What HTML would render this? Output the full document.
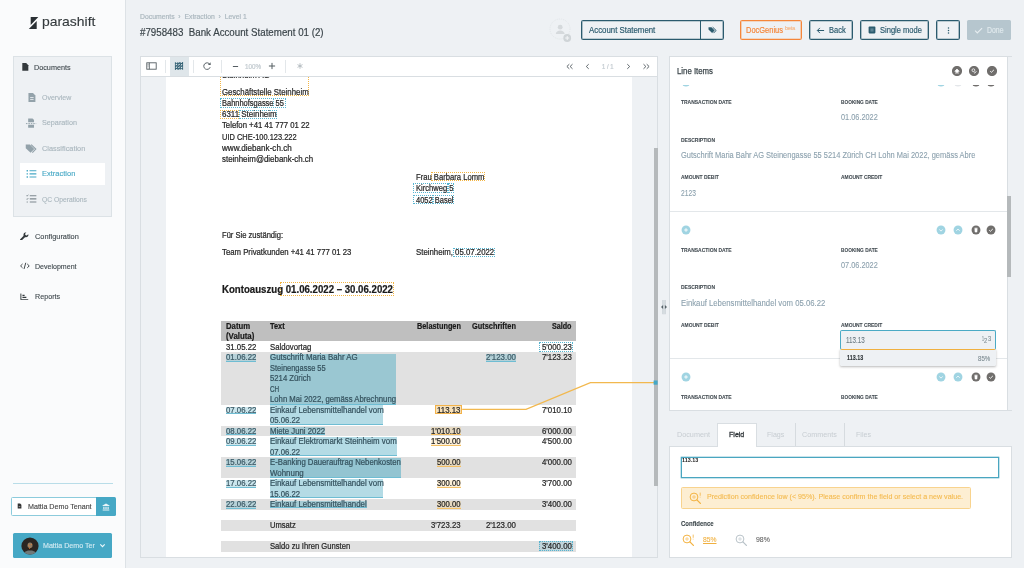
<!DOCTYPE html>
<html><head><meta charset="utf-8"><title>Parashift</title>
<style>
html,body{margin:0;padding:0;}
body{width:1024px;height:568px;overflow:hidden;position:relative;background:#eef1f4;opacity:0.999;will-change:transform;font-family:"Liberation Sans",sans-serif;}
body>div,body>span,body>svg{position:absolute;box-sizing:border-box;}
body>span{white-space:pre;transform-origin:0 50%;}

</style></head><body>
<div style="left:0.00px;top:0.00px;width:125.50px;height:568.00px;background:#fafbfc;border-right:1px solid #dde2e6;"></div>
<svg style="left:28.00px;top:16.00px;" width="12" height="14" viewBox="0 0 12 14"><path d="M2.7 1H10.3L2.7 8.9zM8.7 5V12.9H0.8z" fill="#2a3034"/></svg>
<span style="left:42.00px;top:13.84px;font-size:13.6px;line-height:16.32px;color:#33393c;transform:scaleX(1.0242);-webkit-text-stroke:0.12px;">parashift</span>
<div style="left:13.00px;top:55.50px;width:99.30px;height:161.50px;background:#eef1f4;border:1px solid #dce2e6;"></div>
<div style="left:20.00px;top:163.30px;width:85.40px;height:21.40px;background:#ffffff;"></div>
<span style="left:34.40px;top:62.78px;font-size:7.7px;line-height:9.24px;color:#3f484d;transform:scaleX(0.9411);-webkit-text-stroke:0.12px;">Documents</span>
<span style="left:42.00px;top:92.58px;font-size:7.7px;line-height:9.24px;color:#a9b6bd;transform:scaleX(0.9112);-webkit-text-stroke:0.12px;">Overview</span>
<span style="left:42.00px;top:118.28px;font-size:7.7px;line-height:9.24px;color:#a9b6bd;transform:scaleX(0.9412);-webkit-text-stroke:0.12px;">Separation</span>
<span style="left:42.00px;top:143.78px;font-size:7.7px;line-height:9.24px;color:#a9b6bd;transform:scaleX(0.9559);-webkit-text-stroke:0.12px;">Classification</span>
<span style="left:42.00px;top:169.28px;font-size:7.7px;line-height:9.24px;color:#46a8c5;transform:scaleX(0.9740);-webkit-text-stroke:0.12px;">Extraction</span>
<span style="left:42.00px;top:194.68px;font-size:7.7px;line-height:9.24px;color:#a9b6bd;transform:scaleX(0.8775);-webkit-text-stroke:0.12px;">QC Operations</span>
<span style="left:34.50px;top:231.58px;font-size:7.7px;line-height:9.24px;color:#3f484d;transform:scaleX(0.9577);-webkit-text-stroke:0.12px;">Configuration</span>
<span style="left:34.50px;top:261.78px;font-size:7.7px;line-height:9.24px;color:#3f484d;transform:scaleX(0.9162);-webkit-text-stroke:0.12px;">Development</span>
<span style="left:34.50px;top:292.18px;font-size:7.7px;line-height:9.24px;color:#3f484d;transform:scaleX(0.9323);-webkit-text-stroke:0.12px;">Reports</span>
<div style="left:13.00px;top:483.00px;width:99.50px;height:1.00px;background:#b9dde8;"></div>
<div style="left:11.00px;top:497.30px;width:85.50px;height:18.70px;background:#fff;border:1px solid #8ccbdc;border-radius:1.5px 0 0 1.5px;"></div>
<div style="left:96.00px;top:497.30px;width:19.50px;height:18.70px;background:#46a8c5;border-radius:0 1.5px 1.5px 0;"></div>
<span style="left:27.60px;top:502.56px;font-size:7.4px;line-height:8.88px;color:#444;transform:scaleX(0.9634);-webkit-text-stroke:0.12px;">Mattia Demo Tenant</span>
<div style="left:13.00px;top:533.20px;width:99.30px;height:24.50px;background:#46a8c5;border-radius:1.5px;"></div>
<span style="left:42.80px;top:540.92px;font-size:7.8px;line-height:9.36px;color:#d2eaf2;transform:scaleX(0.9078);-webkit-text-stroke:0.12px;">Mattia Demo Ter</span>
<span style="left:139.80px;top:12.58px;font-size:7.2px;line-height:8.64px;color:#a9b6bd;transform:scaleX(0.9506);-webkit-text-stroke:0.18px;">Documents  ›  Extraction  ›  Level 1</span>
<span style="left:139.80px;top:26.72px;font-size:10.3px;line-height:12.36px;color:#3a4449;transform:scaleX(0.9461);-webkit-text-stroke:0.18px;">#7958483  Bank Account Statement 01 (2)</span>
<div style="left:581.00px;top:20.00px;width:143.00px;height:19.60px;border:1px solid #2b5b6e;border-radius:1.5px;box-shadow:inset 0 0 0 0.35px #2b5b6e;"></div>
<div style="left:700.00px;top:20.00px;width:1.00px;height:19.60px;background:#2b5b6e;"></div>
<span style="left:588.50px;top:26.08px;font-size:8.2px;line-height:9.84px;color:#2b5b6e;transform:scaleX(0.9583);-webkit-text-stroke:0.18px;">Account Statement</span>
<div style="left:739.80px;top:20.20px;width:61.80px;height:19.40px;border:1px solid #f5863a;border-radius:1.5px;box-shadow:inset 0 0 0 0.35px #f5863a;"></div>
<span style="left:746.40px;top:26.08px;font-size:8.2px;line-height:9.84px;color:#f5863a;transform:scaleX(0.9132);-webkit-text-stroke:0.18px;">DocGenius</span>
<span style="left:784.80px;top:25.94px;font-size:4.6px;line-height:5.52px;color:#f6b98a;transform:scaleX(1.1393);-webkit-text-stroke:0.18px;">beta</span>
<div style="left:809.00px;top:20.20px;width:44.00px;height:19.40px;border:1px solid #2b5b6e;border-radius:1.5px;box-shadow:inset 0 0 0 0.35px #2b5b6e;"></div>
<span style="left:829.30px;top:26.08px;font-size:8.2px;line-height:9.84px;color:#2b5b6e;transform:scaleX(0.9174);-webkit-text-stroke:0.18px;">Back</span>
<div style="left:860.00px;top:20.20px;width:69.00px;height:19.40px;border:1px solid #2b5b6e;border-radius:1.5px;box-shadow:inset 0 0 0 0.35px #2b5b6e;"></div>
<span style="left:879.90px;top:26.08px;font-size:8.2px;line-height:9.84px;color:#2b5b6e;transform:scaleX(0.9206);-webkit-text-stroke:0.18px;">Single mode</span>
<div style="left:936.10px;top:20.20px;width:23.60px;height:19.40px;border:1px solid #2b5b6e;border-radius:1.5px;box-shadow:inset 0 0 0 0.35px #2b5b6e;"></div>
<div style="left:966.60px;top:20.20px;width:44.80px;height:19.40px;background:#b6c6ce;border-radius:1.5px;"></div>
<span style="left:987.00px;top:26.08px;font-size:8.2px;line-height:9.84px;color:#dfe8ec;transform:scaleX(0.8479);-webkit-text-stroke:0.18px;">Done</span>
<div style="left:139.60px;top:55.60px;width:518.40px;height:502.00px;background:#eef1f4;border:1px solid #d9dee2;"></div>
<div style="left:166.30px;top:76.60px;width:465.40px;height:480.00px;background:#fff;"></div>
<div style="left:140.60px;top:56.60px;width:516.40px;height:19.40px;background:#fff;"></div>
<div style="left:140.60px;top:76.00px;width:516.40px;height:1.00px;background:#d9dee2;"></div>
<div style="left:170.40px;top:56.60px;width:18.20px;height:19.40px;background:#dfe6ea;"></div>
<div style="left:165.10px;top:60.00px;width:1.00px;height:13.00px;background:#e3e7ea;"></div>
<div style="left:193.10px;top:60.00px;width:1.00px;height:13.00px;background:#e3e7ea;"></div>
<div style="left:221.10px;top:60.00px;width:1.00px;height:13.00px;background:#e3e7ea;"></div>
<div style="left:285.20px;top:60.00px;width:1.00px;height:13.00px;background:#e3e7ea;"></div>
<span style="left:245.30px;top:62.32px;font-size:6.8px;line-height:8.16px;color:#c3cbd0;transform:scaleX(0.9258);">100%</span>
<span style="left:602.00px;top:62.32px;font-size:6.8px;line-height:8.16px;color:#c3cbd0;transform:scaleX(0.8614);">1 / 1</span>
<div style="left:654.00px;top:148.40px;width:3.80px;height:337.20px;background:#b5b9bb;"></div>
<div style="left:669.40px;top:55.60px;width:342.20px;height:355.70px;background:#fff;border:1px solid #d9dee2;border-right:none;"></div>
<div style="left:1007.00px;top:56.60px;width:1.00px;height:353.70px;background:#d9dee2;"></div>
<div style="left:1008.00px;top:56.60px;width:3.60px;height:353.70px;background:#eef1f4;"></div>
<div style="left:1007.20px;top:196.20px;width:4.00px;height:81.30px;background:#b5b9bb;"></div>
<span style="left:677.00px;top:66.08px;font-size:9.2px;line-height:11.04px;color:#3a4449;transform:scaleX(0.8492);-webkit-text-stroke:0.25px;">Line Items</span>
<div style="left:669.40px;top:446.00px;width:342.20px;height:111.60px;background:#fff;border:1px solid #d9dee2;"></div>
<div style="left:716.90px;top:422.50px;width:39.70px;height:24.50px;background:#fff;border:1px solid #d9dee2;border-bottom:none;"></div>
<span style="left:676.70px;top:430.96px;font-size:7.4px;line-height:8.88px;color:#c7cdd2;transform:scaleX(0.9796);">Document</span>
<span style="left:728.90px;top:430.96px;font-size:7.4px;line-height:8.88px;color:#2f3538;transform:scaleX(0.9544);-webkit-text-stroke:0.3px;">Field</span>
<span style="left:766.70px;top:430.96px;font-size:7.4px;line-height:8.88px;color:#c7cdd2;transform:scaleX(0.9570);">Flags</span>
<span style="left:802.00px;top:430.96px;font-size:7.4px;line-height:8.88px;color:#c7cdd2;transform:scaleX(0.9767);">Comments</span>
<span style="left:856.30px;top:430.96px;font-size:7.4px;line-height:8.88px;color:#c7cdd2;transform:scaleX(0.9610);">Files</span>
<div style="left:794.70px;top:423.00px;width:1.00px;height:23.00px;background:#d6dbdf;"></div>
<div style="left:844.20px;top:423.00px;width:1.00px;height:23.00px;background:#d6dbdf;"></div>
<div style="left:219.90px;top:70.00px;width:89.30px;height:25.60px;border:1px dotted #f3b544;border-top:none;"></div>
<span style="left:221.60px;top:70.52px;font-size:8.3px;line-height:9.96px;color:#262626;transform:scaleX(0.9422);-webkit-text-stroke:0.22px;">Steinheim AG</span>
<div style="left:140.60px;top:56.60px;width:516.40px;height:19.40px;background:#fff;"></div>
<div style="left:140.60px;top:76.00px;width:516.40px;height:1.00px;background:#d9dee2;"></div>
<div style="left:170.40px;top:56.60px;width:18.20px;height:19.40px;background:#dfe6ea;"></div>
<div style="left:165.10px;top:60.00px;width:1.00px;height:13.00px;background:#e3e7ea;"></div>
<div style="left:193.10px;top:60.00px;width:1.00px;height:13.00px;background:#e3e7ea;"></div>
<div style="left:221.10px;top:60.00px;width:1.00px;height:13.00px;background:#e3e7ea;"></div>
<div style="left:285.20px;top:60.00px;width:1.00px;height:13.00px;background:#e3e7ea;"></div>
<span style="left:245.30px;top:63.02px;font-size:6.8px;line-height:8.16px;color:#c3cbd0;transform:scaleX(0.9258);-webkit-text-stroke:0.22px;">100%</span>
<span style="left:602.00px;top:63.02px;font-size:6.8px;line-height:8.16px;color:#c3cbd0;transform:scaleX(0.8614);-webkit-text-stroke:0.22px;">1 / 1</span>
<div style="left:220.40px;top:98.20px;width:53.50px;height:10.00px;border:1px dotted #56b4d0;"></div>
<div style="left:273.40px;top:98.20px;width:12.20px;height:10.00px;border:1px dotted #56b4d0;"></div>
<div style="left:220.40px;top:109.80px;width:19.00px;height:8.80px;border:1px dotted #f3b544;"></div>
<div style="left:238.90px;top:109.80px;width:38.30px;height:8.80px;border:1px dotted #56b4d0;"></div>
<span style="left:221.60px;top:87.62px;font-size:8.3px;line-height:9.96px;color:#262626;transform:scaleX(0.9446);-webkit-text-stroke:0.22px;">Geschäftstelle Steinheim</span>
<span style="left:221.60px;top:98.90px;font-size:8.3px;line-height:9.96px;color:#262626;transform:scaleX(0.9006);-webkit-text-stroke:0.22px;">Bahnhofsgasse 55</span>
<span style="left:221.60px;top:110.18px;font-size:8.3px;line-height:9.96px;color:#262626;transform:scaleX(0.9571);-webkit-text-stroke:0.22px;">6311 Steinheim</span>
<span style="left:221.60px;top:121.46px;font-size:8.3px;line-height:9.96px;color:#262626;transform:scaleX(0.9330);-webkit-text-stroke:0.22px;">Telefon +41 41 777 01 22</span>
<span style="left:221.60px;top:132.74px;font-size:8.3px;line-height:9.96px;color:#262626;transform:scaleX(0.8986);-webkit-text-stroke:0.22px;">UID CHE-100.123.222</span>
<span style="left:221.60px;top:144.02px;font-size:8.3px;line-height:9.96px;color:#262626;transform:scaleX(0.9750);-webkit-text-stroke:0.22px;">www.diebank-ch.ch</span>
<span style="left:221.60px;top:155.30px;font-size:8.3px;line-height:9.96px;color:#262626;transform:scaleX(0.9540);-webkit-text-stroke:0.22px;">steinheim@diebank-ch.ch</span>
<div style="left:431.00px;top:172.20px;width:53.80px;height:9.00px;border:1px dotted #f3b544;"></div>
<div style="left:413.30px;top:183.40px;width:34.90px;height:9.60px;border:1px dotted #56b4d0;"></div>
<div style="left:447.70px;top:183.40px;width:6.80px;height:9.60px;border:1px dotted #56b4d0;"></div>
<div style="left:413.30px;top:195.30px;width:20.20px;height:8.90px;border:1px dotted #56b4d0;"></div>
<div style="left:433.00px;top:195.30px;width:21.30px;height:8.90px;border:1px dotted #56b4d0;"></div>
<span style="left:415.60px;top:172.92px;font-size:8.3px;line-height:9.96px;color:#262626;transform:scaleX(0.9212);-webkit-text-stroke:0.22px;">Frau Barbara Lomm</span>
<span style="left:415.60px;top:184.42px;font-size:8.3px;line-height:9.96px;color:#262626;transform:scaleX(0.9136);-webkit-text-stroke:0.22px;">Kirchweg 5</span>
<span style="left:415.60px;top:195.72px;font-size:8.3px;line-height:9.96px;color:#262626;transform:scaleX(0.9029);-webkit-text-stroke:0.22px;">4052 Basel</span>
<span style="left:221.60px;top:230.92px;font-size:8.3px;line-height:9.96px;color:#262626;transform:scaleX(0.9136);-webkit-text-stroke:0.22px;">Für Sie zuständig:</span>
<span style="left:221.60px;top:248.12px;font-size:8.3px;line-height:9.96px;color:#262626;transform:scaleX(0.9366);-webkit-text-stroke:0.22px;">Team Privatkunden +41 41 777 01 23</span>
<div style="left:452.50px;top:247.80px;width:42.80px;height:9.10px;border:1px dotted #56b4d0;"></div>
<span style="left:415.60px;top:248.12px;font-size:8.3px;line-height:9.96px;color:#262626;transform:scaleX(0.9418);-webkit-text-stroke:0.22px;">Steinheim, 05.07.2022</span>
<div style="left:280.00px;top:282.40px;width:113.80px;height:14.00px;border:1px dotted #f3b544;"></div>
<span style="left:221.60px;top:283.88px;font-size:10.2px;line-height:12.24px;color:#1a1a1a;font-weight:700;transform:scaleX(0.9465);-webkit-text-stroke:0.22px;">Kontoauszug 01.06.2022 – 30.06.2022</span>
<div style="left:221.40px;top:320.80px;width:354.40px;height:20.60px;background:#bfbfbf;"></div>
<div style="left:221.40px;top:352.06px;width:354.40px;height:52.55px;background:#e1e1e1;"></div>
<div style="left:221.40px;top:425.62px;width:354.40px;height:10.51px;background:#e1e1e1;"></div>
<div style="left:221.40px;top:457.16px;width:354.40px;height:21.02px;background:#e1e1e1;"></div>
<div style="left:221.40px;top:499.20px;width:354.40px;height:10.51px;background:#e1e1e1;"></div>
<div style="left:221.40px;top:520.22px;width:354.40px;height:10.51px;background:#e1e1e1;"></div>
<div style="left:221.40px;top:541.24px;width:354.40px;height:10.51px;background:#e1e1e1;"></div>
<span style="left:225.70px;top:321.82px;font-size:8.3px;line-height:9.96px;color:#1a1a1a;font-weight:700;transform:scaleX(0.9331);-webkit-text-stroke:0.22px;">Datum</span>
<span style="left:225.70px;top:332.02px;font-size:8.3px;line-height:9.96px;color:#1a1a1a;font-weight:700;transform:scaleX(0.9443);-webkit-text-stroke:0.22px;">(Valuta)</span>
<span style="left:270.30px;top:321.82px;font-size:8.3px;line-height:9.96px;color:#1a1a1a;font-weight:700;transform:scaleX(0.8934);-webkit-text-stroke:0.22px;">Text</span>
<span style="left:417.00px;top:321.82px;font-size:8.3px;line-height:9.96px;color:#1a1a1a;font-weight:700;transform:scaleX(0.8816);-webkit-text-stroke:0.22px;">Belastungen</span>
<span style="left:472.30px;top:321.82px;font-size:8.3px;line-height:9.96px;color:#1a1a1a;font-weight:700;transform:scaleX(0.8900);-webkit-text-stroke:0.22px;">Gutschriften</span>
<span style="left:552.00px;top:321.82px;font-size:8.3px;line-height:9.96px;color:#1a1a1a;font-weight:700;transform:scaleX(0.8631);-webkit-text-stroke:0.22px;">Saldo</span>
<div style="left:225.90px;top:354.31px;width:30.20px;height:7.30px;background:rgba(84,173,196,0.3);border-bottom:1px solid #6fbdd3;"></div>
<div style="left:225.90px;top:406.86px;width:30.20px;height:7.30px;background:rgba(84,173,196,0.3);border-bottom:1px solid #6fbdd3;"></div>
<div style="left:225.90px;top:427.88px;width:30.20px;height:7.30px;background:rgba(84,173,196,0.3);border-bottom:1px solid #6fbdd3;"></div>
<div style="left:225.90px;top:438.39px;width:30.20px;height:7.30px;background:rgba(84,173,196,0.3);border-bottom:1px solid #6fbdd3;"></div>
<div style="left:225.90px;top:459.41px;width:30.20px;height:7.30px;background:rgba(84,173,196,0.3);border-bottom:1px solid #6fbdd3;"></div>
<div style="left:225.90px;top:480.43px;width:30.20px;height:7.30px;background:rgba(84,173,196,0.3);border-bottom:1px solid #6fbdd3;"></div>
<div style="left:225.90px;top:501.45px;width:30.20px;height:7.30px;background:rgba(84,173,196,0.3);border-bottom:1px solid #6fbdd3;"></div>
<div style="left:269.70px;top:354.31px;width:126.70px;height:50.30px;background:rgba(84,173,196,0.5);border-bottom:1px solid #6fbdd3;"></div>
<div style="left:269.70px;top:405.26px;width:113.80px;height:19.51px;background:rgba(84,173,196,0.44);border-bottom:1px solid #6fbdd3;"></div>
<div style="left:269.70px;top:427.28px;width:55.80px;height:7.50px;background:rgba(84,173,196,0.42);border-bottom:1px solid #6fbdd3;"></div>
<div style="left:269.70px;top:437.39px;width:127.40px;height:18.71px;background:rgba(84,173,196,0.44);border-bottom:1px solid #6fbdd3;"></div>
<div style="left:269.70px;top:458.41px;width:131.50px;height:19.76px;background:rgba(84,173,196,0.55);border-bottom:1px solid #6fbdd3;"></div>
<div style="left:269.70px;top:479.43px;width:113.80px;height:18.71px;background:rgba(84,173,196,0.44);border-bottom:1px solid #6fbdd3;"></div>
<div style="left:269.70px;top:500.85px;width:97.40px;height:7.50px;background:rgba(84,173,196,0.42);border-bottom:1px solid #6fbdd3;"></div>
<div style="left:486.30px;top:354.31px;width:30.00px;height:7.30px;background:rgba(84,173,196,0.32);border-bottom:1px solid #6fbdd3;"></div>
<div style="left:431.00px;top:427.28px;width:30.10px;height:7.80px;background:rgba(245,178,60,0.2);border-bottom:1px solid #f3be62;"></div>
<div style="left:431.00px;top:437.79px;width:30.10px;height:7.80px;background:rgba(245,178,60,0.2);border-bottom:1px solid #f3be62;"></div>
<div style="left:436.90px;top:458.81px;width:24.20px;height:7.80px;background:rgba(245,178,60,0.2);border-bottom:1px solid #f3be62;"></div>
<div style="left:436.90px;top:479.83px;width:24.20px;height:7.80px;background:rgba(245,178,60,0.2);border-bottom:1px solid #f3be62;"></div>
<div style="left:436.90px;top:500.85px;width:24.20px;height:7.80px;background:rgba(245,178,60,0.2);border-bottom:1px solid #f3be62;"></div>
<div style="left:435.40px;top:404.80px;width:26.80px;height:9.60px;background:#f8e1b9;border:1px solid #f2b24a;"></div>
<div style="left:539.00px;top:341.90px;width:34.00px;height:9.70px;border:1px dotted #56b4d0;"></div>
<div style="left:539.00px;top:541.40px;width:34.00px;height:10.00px;background:rgba(84,173,196,0.24);border:1px dotted #56b4d0;"></div>
<span style="left:225.70px;top:342.52px;font-size:8.3px;line-height:9.96px;color:#262626;transform:scaleX(0.9382);-webkit-text-stroke:0.22px;">31.05.22</span>
<span style="left:270.30px;top:342.52px;font-size:8.3px;line-height:9.96px;color:#262626;transform:scaleX(0.9349);-webkit-text-stroke:0.22px;">Saldovortag</span>
<span style="left:541.60px;top:342.52px;font-size:8.3px;line-height:9.96px;color:#262626;transform:scaleX(0.9469);-webkit-text-stroke:0.22px;">5'000.23</span>
<span style="left:225.70px;top:353.03px;font-size:8.3px;line-height:9.96px;color:#3d5a66;transform:scaleX(0.9382);-webkit-text-stroke:0.22px;">01.06.22</span>
<span style="left:270.30px;top:353.03px;font-size:8.3px;line-height:9.96px;color:#35525e;transform:scaleX(0.9510);-webkit-text-stroke:0.22px;">Gutschrift Maria Bahr AG</span>
<span style="left:486.30px;top:353.03px;font-size:8.3px;line-height:9.96px;color:#3d5a66;transform:scaleX(0.9469);-webkit-text-stroke:0.22px;">2'123.00</span>
<span style="left:541.60px;top:353.03px;font-size:8.3px;line-height:9.96px;color:#262626;transform:scaleX(0.9469);-webkit-text-stroke:0.22px;">7'123.23</span>
<span style="left:270.30px;top:363.54px;font-size:8.3px;line-height:9.96px;color:#35525e;transform:scaleX(0.9009);-webkit-text-stroke:0.22px;">Steinengasse 55</span>
<span style="left:270.30px;top:374.05px;font-size:8.3px;line-height:9.96px;color:#35525e;transform:scaleX(0.9309);-webkit-text-stroke:0.22px;">5214 Zürich</span>
<span style="left:270.30px;top:384.56px;font-size:8.3px;line-height:9.96px;color:#35525e;transform:scaleX(0.7677);-webkit-text-stroke:0.22px;">CH</span>
<span style="left:270.30px;top:395.07px;font-size:8.3px;line-height:9.96px;color:#35525e;transform:scaleX(0.9323);-webkit-text-stroke:0.22px;">Lohn Mai 2022, gemäss Abrechnung</span>
<span style="left:225.70px;top:405.58px;font-size:8.3px;line-height:9.96px;color:#3d5a66;transform:scaleX(0.9382);-webkit-text-stroke:0.22px;">07.06.22</span>
<span style="left:270.30px;top:405.58px;font-size:8.3px;line-height:9.96px;color:#35525e;transform:scaleX(0.9481);-webkit-text-stroke:0.22px;">Einkauf Lebensmittelhandel vom</span>
<span style="left:437.30px;top:405.58px;font-size:8.3px;line-height:9.96px;color:#262626;transform:scaleX(0.9449);-webkit-text-stroke:0.22px;">113.13</span>
<span style="left:541.60px;top:405.58px;font-size:8.3px;line-height:9.96px;color:#262626;transform:scaleX(0.9469);-webkit-text-stroke:0.22px;">7'010.10</span>
<span style="left:270.30px;top:416.09px;font-size:8.3px;line-height:9.96px;color:#35525e;transform:scaleX(0.9289);-webkit-text-stroke:0.22px;">05.06.22</span>
<span style="left:225.70px;top:426.60px;font-size:8.3px;line-height:9.96px;color:#3d5a66;transform:scaleX(0.9382);-webkit-text-stroke:0.22px;">08.06.22</span>
<span style="left:270.30px;top:426.60px;font-size:8.3px;line-height:9.96px;color:#35525e;transform:scaleX(0.9406);-webkit-text-stroke:0.22px;">Miete Juni 2022</span>
<span style="left:431.20px;top:426.60px;font-size:8.3px;line-height:9.96px;color:#262626;transform:scaleX(0.9342);-webkit-text-stroke:0.22px;">1'010.10</span>
<span style="left:541.60px;top:426.60px;font-size:8.3px;line-height:9.96px;color:#262626;transform:scaleX(0.9469);-webkit-text-stroke:0.22px;">6'000.00</span>
<span style="left:225.70px;top:437.11px;font-size:8.3px;line-height:9.96px;color:#3d5a66;transform:scaleX(0.9382);-webkit-text-stroke:0.22px;">09.06.22</span>
<span style="left:270.30px;top:437.11px;font-size:8.3px;line-height:9.96px;color:#35525e;transform:scaleX(0.9474);-webkit-text-stroke:0.22px;">Einkauf Elektromarkt Steinheim vom</span>
<span style="left:431.20px;top:437.11px;font-size:8.3px;line-height:9.96px;color:#262626;transform:scaleX(0.9342);-webkit-text-stroke:0.22px;">1'500.00</span>
<span style="left:541.60px;top:437.11px;font-size:8.3px;line-height:9.96px;color:#262626;transform:scaleX(0.9469);-webkit-text-stroke:0.22px;">4'500.00</span>
<span style="left:270.30px;top:447.62px;font-size:8.3px;line-height:9.96px;color:#35525e;transform:scaleX(0.9289);-webkit-text-stroke:0.22px;">07.06.22</span>
<span style="left:225.70px;top:458.13px;font-size:8.3px;line-height:9.96px;color:#3d5a66;transform:scaleX(0.9382);-webkit-text-stroke:0.22px;">15.06.22</span>
<span style="left:270.30px;top:458.13px;font-size:8.3px;line-height:9.96px;color:#35525e;transform:scaleX(0.9328);-webkit-text-stroke:0.22px;">E-Banking Dauerauftrag Nebenkosten</span>
<span style="left:437.30px;top:458.13px;font-size:8.3px;line-height:9.96px;color:#262626;transform:scaleX(0.9216);-webkit-text-stroke:0.22px;">500.00</span>
<span style="left:541.60px;top:458.13px;font-size:8.3px;line-height:9.96px;color:#262626;transform:scaleX(0.9469);-webkit-text-stroke:0.22px;">4'000.00</span>
<span style="left:270.30px;top:468.64px;font-size:8.3px;line-height:9.96px;color:#35525e;transform:scaleX(0.9527);-webkit-text-stroke:0.22px;">Wohnung</span>
<span style="left:225.70px;top:479.15px;font-size:8.3px;line-height:9.96px;color:#3d5a66;transform:scaleX(0.9382);-webkit-text-stroke:0.22px;">17.06.22</span>
<span style="left:270.30px;top:479.15px;font-size:8.3px;line-height:9.96px;color:#35525e;transform:scaleX(0.9481);-webkit-text-stroke:0.22px;">Einkauf Lebensmittelhandel vom</span>
<span style="left:437.30px;top:479.15px;font-size:8.3px;line-height:9.96px;color:#262626;transform:scaleX(0.9216);-webkit-text-stroke:0.22px;">300.00</span>
<span style="left:541.60px;top:479.15px;font-size:8.3px;line-height:9.96px;color:#262626;transform:scaleX(0.9469);-webkit-text-stroke:0.22px;">3'700.00</span>
<span style="left:270.30px;top:489.66px;font-size:8.3px;line-height:9.96px;color:#35525e;transform:scaleX(0.9289);-webkit-text-stroke:0.22px;">15.06.22</span>
<span style="left:225.70px;top:500.17px;font-size:8.3px;line-height:9.96px;color:#3d5a66;transform:scaleX(0.9382);-webkit-text-stroke:0.22px;">22.06.22</span>
<span style="left:270.30px;top:500.17px;font-size:8.3px;line-height:9.96px;color:#35525e;transform:scaleX(0.9486);-webkit-text-stroke:0.22px;">Einkauf Lebensmittelhandel</span>
<span style="left:437.30px;top:500.17px;font-size:8.3px;line-height:9.96px;color:#262626;transform:scaleX(0.9216);-webkit-text-stroke:0.22px;">300.00</span>
<span style="left:541.60px;top:500.17px;font-size:8.3px;line-height:9.96px;color:#262626;transform:scaleX(0.9469);-webkit-text-stroke:0.22px;">3'400.00</span>
<span style="left:270.30px;top:521.19px;font-size:8.3px;line-height:9.96px;color:#262626;transform:scaleX(0.9138);-webkit-text-stroke:0.22px;">Umsatz</span>
<span style="left:431.20px;top:521.19px;font-size:8.3px;line-height:9.96px;color:#262626;transform:scaleX(0.9342);-webkit-text-stroke:0.22px;">3'723.23</span>
<span style="left:486.30px;top:521.19px;font-size:8.3px;line-height:9.96px;color:#262626;transform:scaleX(0.9469);-webkit-text-stroke:0.22px;">2'123.00</span>
<span style="left:270.30px;top:542.21px;font-size:8.3px;line-height:9.96px;color:#262626;transform:scaleX(0.9199);-webkit-text-stroke:0.22px;">Saldo zu Ihren Gunsten</span>
<span style="left:541.60px;top:542.21px;font-size:8.3px;line-height:9.96px;color:#262626;transform:scaleX(0.9469);-webkit-text-stroke:0.22px;">3'400.00</span>
<svg style="left:455.00px;top:370.00px;" width="205" height="50" viewBox="0 0 205 50"><polyline points="7.2,39.4 71,39.4 135.4,12.6 199.5,12.6" fill="none" stroke="#f2b84e" stroke-width="1.25"/><rect x="198.6" y="10.5" width="4" height="4.2" fill="#46a8c5"/></svg>
<svg style="left:680.70px;top:76.90px;" width="10" height="10" viewBox="-5 -5 10 10"><circle r="4.45" fill="#a0d4e2"/><path d="M-1.8 0H1.8M0 -1.8V1.8" stroke="#fff" stroke-width="0.9" fill="none"/></svg>
<svg style="left:936.20px;top:76.90px;" width="10" height="10" viewBox="-5 -5 10 10"><circle r="4.45" fill="#a0d4e2"/><path d="M-1.7 -0.5L0 1.1 1.7 -0.5" stroke="#fff" stroke-width="0.8" fill="none"/></svg>
<svg style="left:952.70px;top:76.90px;" width="10" height="10" viewBox="-5 -5 10 10"><circle r="4.45" fill="#e4e7ea"/><path d="M-1.7 0.7L0 -0.9 1.7 0.7" stroke="#fff" stroke-width="0.8" fill="none"/></svg>
<svg style="left:971.00px;top:76.90px;" width="10" height="10" viewBox="-5 -5 10 10"><circle r="4.45" fill="#706e6c"/><path d="M-1.2 -1.5H1.2L1 2.1H-1zM-1.5 -2H1.5" stroke="#fff" stroke-width="0.5" fill="#fff"/></svg>
<svg style="left:986.40px;top:76.90px;" width="10" height="10" viewBox="-5 -5 10 10"><circle r="4.45" fill="#706e6c"/><path d="M-1.8 0.2L-0.6 1.3 1.9 -1.1" stroke="#fff" stroke-width="0.9" fill="none"/></svg>
<span style="left:681.30px;top:98.84px;font-size:5.6px;line-height:6.72px;color:#434c52;font-weight:700;transform:scaleX(0.8865);-webkit-text-stroke:0.1px;">TRANSACTION DATE</span>
<span style="left:841.30px;top:98.84px;font-size:5.6px;line-height:6.72px;color:#434c52;font-weight:700;transform:scaleX(0.8540);-webkit-text-stroke:0.1px;">BOOKING DATE</span>
<span style="left:841.30px;top:112.32px;font-size:8.8px;line-height:10.56px;color:#8ba0ad;transform:scaleX(0.8358);-webkit-text-stroke:0.1px;">01.06.2022</span>
<span style="left:681.30px;top:136.64px;font-size:5.6px;line-height:6.72px;color:#434c52;font-weight:700;transform:scaleX(0.8919);-webkit-text-stroke:0.1px;">DESCRIPTION</span>
<span style="left:681.30px;top:149.92px;font-size:8.8px;line-height:10.56px;color:#8ba0ad;transform:scaleX(0.8489);-webkit-text-stroke:0.1px;">Gutschrift Maria Bahr AG Steinengasse 55 5214 Zürich CH Lohn Mai 2022, gemäss Abre</span>
<span style="left:681.30px;top:174.14px;font-size:5.6px;line-height:6.72px;color:#434c52;font-weight:700;transform:scaleX(0.8813);-webkit-text-stroke:0.1px;">AMOUNT DEBIT</span>
<span style="left:841.30px;top:174.14px;font-size:5.6px;line-height:6.72px;color:#434c52;font-weight:700;transform:scaleX(0.8802);-webkit-text-stroke:0.1px;">AMOUNT CREDIT</span>
<span style="left:681.30px;top:187.62px;font-size:8.8px;line-height:10.56px;color:#8ba0ad;transform:scaleX(0.7611);-webkit-text-stroke:0.1px;">2123</span>
<div style="left:670.40px;top:56.60px;width:336.60px;height:28.20px;background:#fff;"></div>
<span style="left:677.00px;top:66.08px;font-size:9.2px;line-height:11.04px;color:#3a4449;transform:scaleX(0.8492);-webkit-text-stroke:0.1px;-webkit-text-stroke:0.25px;">Line Items</span>
<svg style="left:952.20px;top:65.70px;" width="10" height="10" viewBox="-5 -5 10 10"><circle r="5.1" fill="#706e6c"/><path d="M-2.2 0.3L0 -2 2.2 0.3H1V1.2H-1V0.3zM-2 2H2" stroke="#fff" stroke-width="0.7" fill="#fff"/></svg>
<svg style="left:969.30px;top:65.70px;" width="10" height="10" viewBox="-5 -5 10 10"><circle r="5.1" fill="#706e6c"/><circle cx="-0.6" cy="-0.8" r="1.4" fill="none" stroke="#fff" stroke-width="0.8"/><path d="M-0.2 1.3L0.8 2.2 2.4 0.2" stroke="#fff" stroke-width="0.8" fill="none"/></svg>
<svg style="left:986.50px;top:65.70px;" width="10" height="10" viewBox="-5 -5 10 10"><circle r="5.1" fill="#706e6c"/><path d="M-1.8 0.2L-0.6 1.3 1.9 -1.1" stroke="#fff" stroke-width="0.9" fill="none"/></svg>
<div style="left:670.40px;top:210.60px;width:336.60px;height:1.40px;background:#e3e7ea;"></div>
<svg style="left:680.70px;top:224.60px;" width="10" height="10" viewBox="-5 -5 10 10"><circle r="4.45" fill="#a0d4e2"/><path d="M-1.8 0H1.8M0 -1.8V1.8" stroke="#fff" stroke-width="0.9" fill="none"/></svg>
<svg style="left:936.20px;top:224.60px;" width="10" height="10" viewBox="-5 -5 10 10"><circle r="4.45" fill="#a0d4e2"/><path d="M-1.7 -0.5L0 1.1 1.7 -0.5" stroke="#fff" stroke-width="0.8" fill="none"/></svg>
<svg style="left:952.70px;top:224.60px;" width="10" height="10" viewBox="-5 -5 10 10"><circle r="4.45" fill="#a0d4e2"/><path d="M-1.7 0.7L0 -0.9 1.7 0.7" stroke="#fff" stroke-width="0.8" fill="none"/></svg>
<svg style="left:971.00px;top:224.60px;" width="10" height="10" viewBox="-5 -5 10 10"><circle r="4.45" fill="#706e6c"/><path d="M-1.2 -1.5H1.2L1 2.1H-1zM-1.5 -2H1.5" stroke="#fff" stroke-width="0.5" fill="#fff"/></svg>
<svg style="left:986.40px;top:224.60px;" width="10" height="10" viewBox="-5 -5 10 10"><circle r="4.45" fill="#706e6c"/><path d="M-1.8 0.2L-0.6 1.3 1.9 -1.1" stroke="#fff" stroke-width="0.9" fill="none"/></svg>
<span style="left:681.30px;top:246.54px;font-size:5.6px;line-height:6.72px;color:#434c52;font-weight:700;transform:scaleX(0.8865);-webkit-text-stroke:0.1px;">TRANSACTION DATE</span>
<span style="left:841.30px;top:246.54px;font-size:5.6px;line-height:6.72px;color:#434c52;font-weight:700;transform:scaleX(0.8540);-webkit-text-stroke:0.1px;">BOOKING DATE</span>
<span style="left:841.30px;top:260.02px;font-size:8.8px;line-height:10.56px;color:#8ba0ad;transform:scaleX(0.8358);-webkit-text-stroke:0.1px;">07.06.2022</span>
<span style="left:681.30px;top:284.34px;font-size:5.6px;line-height:6.72px;color:#434c52;font-weight:700;transform:scaleX(0.8919);-webkit-text-stroke:0.1px;">DESCRIPTION</span>
<span style="left:681.30px;top:297.62px;font-size:8.8px;line-height:10.56px;color:#8ba0ad;transform:scaleX(0.8807);-webkit-text-stroke:0.1px;">Einkauf Lebensmittelhandel vom 05.06.22</span>
<span style="left:681.30px;top:321.84px;font-size:5.6px;line-height:6.72px;color:#434c52;font-weight:700;transform:scaleX(0.8813);-webkit-text-stroke:0.1px;">AMOUNT DEBIT</span>
<span style="left:841.30px;top:321.84px;font-size:5.6px;line-height:6.72px;color:#434c52;font-weight:700;transform:scaleX(0.8802);-webkit-text-stroke:0.1px;">AMOUNT CREDIT</span>
<div style="left:670.40px;top:358.00px;width:336.60px;height:1.40px;background:#e3e7ea;"></div>
<svg style="left:680.70px;top:372.30px;" width="10" height="10" viewBox="-5 -5 10 10"><circle r="4.45" fill="#a0d4e2"/><path d="M-1.8 0H1.8M0 -1.8V1.8" stroke="#fff" stroke-width="0.9" fill="none"/></svg>
<svg style="left:936.20px;top:372.30px;" width="10" height="10" viewBox="-5 -5 10 10"><circle r="4.45" fill="#a0d4e2"/><path d="M-1.7 -0.5L0 1.1 1.7 -0.5" stroke="#fff" stroke-width="0.8" fill="none"/></svg>
<svg style="left:952.70px;top:372.30px;" width="10" height="10" viewBox="-5 -5 10 10"><circle r="4.45" fill="#a0d4e2"/><path d="M-1.7 0.7L0 -0.9 1.7 0.7" stroke="#fff" stroke-width="0.8" fill="none"/></svg>
<svg style="left:971.00px;top:372.30px;" width="10" height="10" viewBox="-5 -5 10 10"><circle r="4.45" fill="#706e6c"/><path d="M-1.2 -1.5H1.2L1 2.1H-1zM-1.5 -2H1.5" stroke="#fff" stroke-width="0.5" fill="#fff"/></svg>
<svg style="left:986.40px;top:372.30px;" width="10" height="10" viewBox="-5 -5 10 10"><circle r="4.45" fill="#706e6c"/><path d="M-1.8 0.2L-0.6 1.3 1.9 -1.1" stroke="#fff" stroke-width="0.9" fill="none"/></svg>
<span style="left:681.30px;top:394.24px;font-size:5.6px;line-height:6.72px;color:#434c52;font-weight:700;transform:scaleX(0.8865);-webkit-text-stroke:0.1px;">TRANSACTION DATE</span>
<span style="left:841.30px;top:394.24px;font-size:5.6px;line-height:6.72px;color:#434c52;font-weight:700;transform:scaleX(0.8540);-webkit-text-stroke:0.1px;">BOOKING DATE</span>
<span style="left:841.30px;top:407.72px;font-size:8.8px;line-height:10.56px;color:#8ba0ad;transform:scaleX(0.8358);-webkit-text-stroke:0.1px;">09.06.2022</span>
<div style="left:670.40px;top:410.30px;width:341.20px;height:1.00px;background:#d9dee2;"></div>
<div style="left:660.00px;top:411.30px;width:355.00px;height:10.70px;background:#eef1f4;"></div>
<div style="left:840.40px;top:349.00px;width:155.40px;height:16.80px;background:#eef1f4;box-shadow:0 1px 2.5px rgba(0,0,0,0.28);border-radius:0 0 1.5px 1.5px;"></div>
<div style="left:840.20px;top:329.50px;width:156.00px;height:20.40px;background:#eef1f4;border:1px solid #4baac5;border-bottom:1.6px solid #f0b040;border-radius:2px;"></div>
<span style="left:846.00px;top:334.62px;font-size:8.8px;line-height:10.56px;color:#6b7a82;transform:scaleX(0.7158);-webkit-text-stroke:0.1px;">113.13</span>
<span style="left:981.60px;top:334.56px;font-size:6.4px;line-height:7.68px;color:#7d8b92;transform:scaleX(0.5614);-webkit-text-stroke:0.1px;">1</span>
<span style="left:984.20px;top:337.06px;font-size:6.4px;line-height:7.68px;color:#7d8b92;transform:scaleX(0.8982);-webkit-text-stroke:0.1px;">2</span>
<span style="left:987.80px;top:334.56px;font-size:6.4px;line-height:7.68px;color:#7d8b92;transform:scaleX(0.8982);-webkit-text-stroke:0.1px;">3</span>
<span style="left:846.60px;top:354.26px;font-size:7.4px;line-height:8.88px;color:#2f3538;font-weight:700;transform:scaleX(0.7296);-webkit-text-stroke:0.1px;">113.13</span>
<span style="left:977.60px;top:354.62px;font-size:6.8px;line-height:8.16px;color:#7d8b92;transform:scaleX(0.9038);-webkit-text-stroke:0.1px;">85%</span>
<div style="left:681.20px;top:457.00px;width:318.10px;height:20.80px;background:#fff;border:1px solid #4aa6c0;box-shadow:0 0 0 0.3px #4aa6c0;"></div>
<span style="left:682.00px;top:457.06px;font-size:5.4px;line-height:6.48px;color:#222;font-weight:700;font-family:"Liberation Serif", serif;transform:scaleX(1.0800);-webkit-text-stroke:0.1px;">113.13</span>
<div style="left:681.20px;top:486.60px;width:290.00px;height:22.20px;background:#fdeed2;border:1px solid #f8d38e;border-radius:1.5px;"></div>
<span style="left:707.10px;top:493.18px;font-size:7.2px;line-height:8.64px;color:#f3b94d;transform:scaleX(0.9884);-webkit-text-stroke:0.1px;">Prediction confidence low (&lt; 95%). Please confirm the field or select a new value.</span>
<span style="left:681.30px;top:520.22px;font-size:6.8px;line-height:8.16px;color:#3a4449;font-weight:700;transform:scaleX(0.8807);-webkit-text-stroke:0.1px;">Confidence</span>
<span style="left:703.00px;top:535.80px;font-size:7px;line-height:8.4px;color:#f0b040;transform:scaleX(0.9632);-webkit-text-stroke:0.1px;text-decoration:underline;">85%</span>
<span style="left:755.50px;top:535.80px;font-size:7px;line-height:8.4px;color:#666;transform:scaleX(0.9918);-webkit-text-stroke:0.1px;">98%</span>
<svg style="left:687.60px;top:490.60px;" width="14" height="14" viewBox="-7 -7 14 14"><circle cx="-1" cy="-1" r="3.9" fill="none" stroke="#f3b240" stroke-width="1"/><path d="M1.9 1.9L5.4 5.4" stroke="#f3b240" stroke-width="1.3" stroke-linecap="round"/><path d="M-3 -1H1M-1 -3V1" stroke="#f3b240" stroke-width="0.7" opacity="0.8"/><path d="M5.2 -5.4V-2.2M5.2 -1.2V-0.6" stroke="#f3b240" stroke-width="0.8"/></svg>
<svg style="left:681.20px;top:533.00px;" width="14" height="14" viewBox="-7 -7 14 14"><circle cx="-1" cy="-1" r="3.9" fill="none" stroke="#f3b240" stroke-width="1"/><path d="M1.9 1.9L5.4 5.4" stroke="#f3b240" stroke-width="1.3" stroke-linecap="round"/><path d="M-3 -1H1M-1 -3V1" stroke="#f3b240" stroke-width="0.7" opacity="0.8"/><path d="M5.2 -5.4V-2.2M5.2 -1.2V-0.6" stroke="#f3b240" stroke-width="0.8"/></svg>
<svg style="left:733.80px;top:533.00px;" width="14" height="14" viewBox="-7 -7 14 14"><circle cx="-1" cy="-1" r="3.9" fill="none" stroke="#b9c3c9" stroke-width="1"/><path d="M1.9 1.9L5.4 5.4" stroke="#b9c3c9" stroke-width="1.3" stroke-linecap="round"/><path d="M-3 -1H1M-1 -3V1" stroke="#b9c3c9" stroke-width="0.7" opacity="0.8"/></svg>
<svg style="left:20.68px;top:62.34px;" width="8.64" height="9.72" viewBox="-4.0 -4.5 8 9"><path d="M-2.8 -3.6H0.8L2.8 -1.6V3.6H-2.8z" fill="#33393c"/></svg>
<svg style="left:26.62px;top:91.51px;" width="9.76" height="10.98" viewBox="-4.0 -4.5 8 9"><path d="M-2.8 -3.7H0.9L2.9 -1.7V3.7H-2.8z" fill="#93a2aa"/><path d="M-1.4 0H1.4M-1.4 1.6H1.4" stroke="#eef1f4" stroke-width="0.7"/></svg>
<svg style="left:25.20px;top:116.60px;" width="12.20" height="12.20" viewBox="-5.0 -5.0 10 10"><path d="M-2.4 -3.8H1.2L2.4 -2.6V-0.6H-2.4zM-2.4 1.4H2.4V3.8H-2.4z" fill="#93a2aa"/><path d="M-4.2 0.4H4.2" stroke="#93a2aa" stroke-width="0.8" stroke-dasharray="1.2 0.8"/></svg>
<svg style="left:25.30px;top:142.71px;" width="12.20" height="10.98" viewBox="-5.0 -4.5 10 9"><path d="M-4.4 -3.2H-1L2.6 0.4 -0.4 3.4 -4.4 -0.2z" fill="#93a2aa"/><path d="M0 -3.2L3.8 0.5 1 3.4" fill="none" stroke="#93a2aa" stroke-width="1"/></svg>
<svg style="left:26.01px;top:168.82px;" width="10.98" height="9.76" viewBox="-4.5 -4.0 9 8"><path d="M-1.6 -2.6H4M-1.6 0H4M-1.6 2.6H4" stroke="#46a8c5" stroke-width="0.9"/><path d="M-4 -2.6H-2.9M-4 0H-2.9M-4 2.6H-2.9" stroke="#46a8c5" stroke-width="1.1"/></svg>
<svg style="left:26.01px;top:194.12px;" width="10.98" height="9.76" viewBox="-4.5 -4.0 9 8"><path d="M-1.4 -2.6H4M-1.4 0H4M-1.4 2.6H4" stroke="#7d888e" stroke-width="0.9"/><path d="M-4.2 -2.8L-3.6 -2.2 -2.6 -3.4M-4.2 -0.1L-3.6 0.5 -2.6 -0.7M-4 2.6H-2.9" stroke="#7d888e" stroke-width="0.7" fill="none"/></svg>
<svg style="left:20.29px;top:231.59px;" width="8.82" height="8.82" viewBox="-4.5 -4.5 9 9"><path d="M-3.6 3.6L0.4 -0.4" stroke="#33393c" stroke-width="1.9" stroke-linecap="round"/><path d="M3.9 -2.3A2.5 2.5 0 1 1 2 -4L0.7 -2.6 1 -1.2 2.4 -0.9z" fill="#33393c"/></svg>
<svg style="left:19.80px;top:262.38px;" width="9.80" height="7.84" viewBox="-5.0 -4.0 10 8"><path d="M-2.4 -2L-4.4 0 -2.4 2M2.4 -2L4.4 0 2.4 2M0.9 -3.2L-0.9 3.2" stroke="#33393c" stroke-width="0.95" fill="none"/></svg>
<svg style="left:20.29px;top:292.58px;" width="8.82" height="7.84" viewBox="-4.5 -4.0 9 8"><path d="M-3.6 -3.4V2.9H3.9" stroke="#33393c" stroke-width="1" fill="none"/><path d="M-2 -2.2H0.2V-0.9H-2zM-2 -0.2H2V1.2H-2z" fill="#33393c"/></svg>
<svg style="left:16.70px;top:502.60px;" width="5.00" height="6.00" viewBox="-2.5 -3.0 5 6"><path d="M-1.8 -2.6H0.6L1.9 -1.3V2.6H-1.8z" fill="#333"/><path d="M-0.8 0.6H0.8" stroke="#fff" stroke-width="0.5"/></svg>
<svg style="left:101.70px;top:502.50px;" width="8.00" height="8.00" viewBox="-4.0 -4.0 8 8"><path d="M0 -3.6L3.5 -1.6V-0.9H-3.5V-1.6zM-2.7 -0.3H-1.5V2H-2.7zM-0.6 -0.3H0.6V2H-0.6zM1.5 -0.3H2.7V2H1.5zM-3.3 2.5H3.3V3.5H-3.3z" fill="#e8f4f8"/></svg>
<svg style="left:20.50px;top:536.70px;" width="18.00" height="18.00" viewBox="-9.0 -9.0 18 18"><defs><clipPath id="av"><circle r="8.6"/></clipPath></defs><circle r="8.6" fill="#2a2623"/><g clip-path="url(#av)"><path d="M-7 9L-5 5.8 -2 4.6 2 4.6 5 5.8 7 9z" fill="#6f7878"/><ellipse cx="0" cy="-0.4" rx="2.5" ry="3.1" fill="#8f7b64"/><path d="M-2.6 0.8C-2.4 4.8 2.4 4.8 2.6 0.8C1.6 2.4 -1.6 2.4 -2.6 0.8z" fill="#2b1f17"/><circle cx="-1.2" cy="-0.9" r="0.55" fill="#f0822e"/><circle cx="1.3" cy="-1.5" r="0.5" fill="#f0822e"/><circle cx="-0.2" cy="0.5" r="0.45" fill="#f0822e"/><circle cx="-0.3" cy="2.6" r="0.5" fill="#f0822e"/></g></svg>
<svg style="left:98.50px;top:543.10px;" width="7.00" height="5.00" viewBox="-3.5 -2.5 7 5"><path d="M-2.2 -1.1L0 1.1 2.2 -1.1" stroke="#eef8fb" stroke-width="1.15" fill="none"/></svg>
<svg style="left:146.00px;top:62.30px;" width="11.00" height="8.00" viewBox="-5.5 -4.0 11 8"><rect x="-4.7" y="-3.2" width="9.4" height="6.4" fill="none" stroke="#555e63" stroke-width="0.9"/><path d="M-2.2 -3.2V3.2" stroke="#555e63" stroke-width="0.9"/><path d="M-4 -1.6H-2.8M-4 0H-2.8" stroke="#555e63" stroke-width="0.5"/></svg>
<svg style="left:174.40px;top:61.40px;" width="10.00" height="10.00" viewBox="-5.0 -5.0 10 10"><path d="M-3.6 -3.8V3.8M-1.2 -3.8V3.8M1.2 -3.8V3.8M3.6 -3.8V3.8M-4 -2.6H4M-4 0H4M-4 2.6H4" stroke="#2b5b6e" stroke-width="0.8"/><path d="M-3.8 3.6L3.8 -3.6M-3.8 1L1 -3.6M-1 3.6L3.8 -1" stroke="#2b5b6e" stroke-width="0.9"/></svg>
<svg style="left:202.30px;top:61.20px;" width="10.00" height="10.00" viewBox="-5.0 -5.0 10 10"><path d="M2.9 -1.6A3.3 3.3 0 1 0 3.2 1.2" stroke="#555e63" stroke-width="0.95" fill="none"/><path d="M3.6 -3.8V-1H0.9z" fill="#555e63"/></svg>
<svg style="left:231.50px;top:64.90px;" width="7.00" height="3.00" viewBox="-3.5 -1.5 7 3"><path d="M-2.6 0H2.6" stroke="#555e63" stroke-width="1"/></svg>
<svg style="left:268.00px;top:62.40px;" width="8.00" height="8.00" viewBox="-4.0 -4.0 8 8"><path d="M-3.1 0H3.1M0 -3.1V3.1" stroke="#555e63" stroke-width="1"/></svg>
<svg style="left:295.70px;top:62.30px;" width="8.00" height="8.00" viewBox="-4.0 -4.0 8 8"><path d="M0 -2.8V2.8M-2.5 -1.4L2.5 1.4M-2.5 1.4L2.5 -1.4" stroke="#aab3b8" stroke-width="0.8"/></svg>
<svg style="left:564.90px;top:62.70px;" width="9.00" height="7.00" viewBox="-4.5 -3.5 9 7"><path d="M-0.20000000000000018 -2.3L-2.6 0 -0.20000000000000018 2.3M3.0 -2.3L0.6000000000000001 0 3.0 2.3" stroke="#555e63" stroke-width="0.95" fill="none"/></svg>
<svg style="left:583.10px;top:62.70px;" width="9.00" height="7.00" viewBox="-4.5 -3.5 9 7"><path d="M1.2 -2.3L-1.2 0 1.2 2.3" stroke="#555e63" stroke-width="0.95" fill="none"/></svg>
<svg style="left:623.50px;top:62.70px;" width="9.00" height="7.00" viewBox="-4.5 -3.5 9 7"><path d="M-1.2 -2.3L1.2 0 -1.2 2.3" stroke="#555e63" stroke-width="0.95" fill="none"/></svg>
<svg style="left:641.60px;top:62.70px;" width="9.00" height="7.00" viewBox="-4.5 -3.5 9 7"><path d="M-3.0 -2.3L-0.6000000000000001 0 -3.0 2.3M0.20000000000000018 -2.3L2.6 0 0.20000000000000018 2.3" stroke="#555e63" stroke-width="0.95" fill="none"/></svg>
<svg style="left:545.60px;top:15.40px;" width="28.00" height="28.00" viewBox="-14.0 -14.0 28 28"><circle r="10" fill="none" stroke="#dde1e4" stroke-width="0.7" stroke-dasharray="1 1"/><circle cx="0.2" cy="-1.8" r="2.4" fill="#d5d9dc"/><path d="M-4.2 5C-4.2 0.2 4.6 0.2 4.6 5z" fill="#d5d9dc"/><circle cx="7.2" cy="9" r="3.9" fill="#cfd4d7"/><path d="M5.2 9H9.2M7.2 7V11" stroke="#f3f5f7" stroke-width="1"/></svg>
<svg style="left:707.50px;top:26.20px;" width="9.00" height="8.00" viewBox="-4.5 -4.0 9 8"><path d="M-4 -2.8H-1L2.2 0.4 -0.4 3 -4 -0.4z" fill="#2b5b6e"/><path d="M0.2 -2.8L3.6 0.5 1 3.1" fill="none" stroke="#2b5b6e" stroke-width="1"/></svg>
<svg style="left:816.10px;top:26.70px;" width="9.00" height="7.00" viewBox="-4.5 -3.5 9 7"><path d="M3.6 0H-3M-0.6 -2.6L-3.2 0 -0.6 2.6" stroke="#2b5b6e" stroke-width="1" fill="none"/></svg>
<svg style="left:867.50px;top:26.30px;" width="8.00" height="8.00" viewBox="-4.0 -4.0 8 8"><rect x="-3.4" y="-3.4" width="6.8" height="6.8" rx="0.8" fill="#2b5b6e"/><rect x="-1.6" y="-1.6" width="3.2" height="3.2" fill="#5d8596"/></svg>
<svg style="left:946.50px;top:25.70px;" width="3.00" height="9.00" viewBox="-1.5 -4.5 3 9"><circle cy="-2.6" r="0.75" fill="#2b5b6e"/><circle cy="0" r="0.75" fill="#2b5b6e"/><circle cy="2.6" r="0.75" fill="#2b5b6e"/></svg>
<svg style="left:973.50px;top:26.90px;" width="9.00" height="7.00" viewBox="-4.5 -3.5 9 7"><path d="M-3.4 0.2L-1.2 2.4 3.6 -2.4" stroke="#e6edf0" stroke-width="1.1" fill="none"/></svg>
<svg style="left:659.80px;top:299.00px;" width="8.00" height="16.00" viewBox="-4.0 -8.0 8 16"><rect x="-1.7" y="-7" width="3.4" height="14.2" fill="#c6ced3"/><path d="M0 -7V7.2" stroke="#eef2f5" stroke-width="0.8"/><path d="M-0.9 -1.9L-3 0 -0.9 1.9zM0.9 -1.9L3 0 0.9 1.9z" fill="#566268"/></svg>
</body></html>
